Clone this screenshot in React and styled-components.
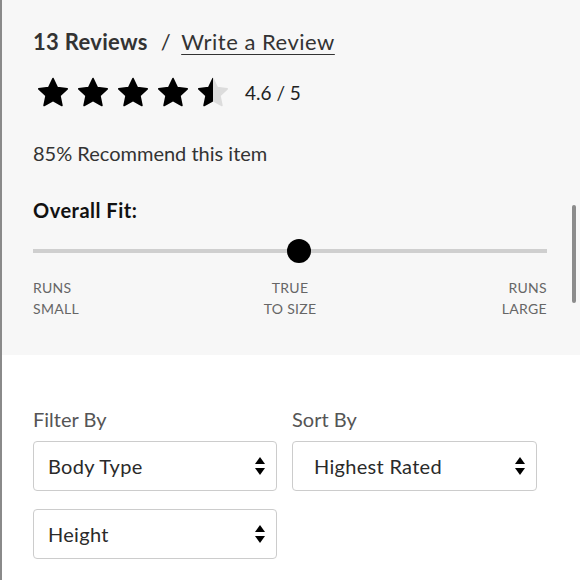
import React from "react";
import styled, { createGlobalStyle } from "styled-components";

const Global = createGlobalStyle`
  html, body { margin: 0; padding: 0; background: #ffffff; }
  body { font-family: Lato, "Noto Sans", sans-serif; color: #222; }
`;

const Page = styled.div`
  position: relative;
  width: 580px;
  height: 580px;
  overflow: hidden;
  box-sizing: border-box;
  border-left: 2px solid #8a8a8a;
  background: #fff;
`;

const Panel = styled.section`
  background: #f7f7f7;
  height: 355px;
  box-sizing: border-box;
  padding: 29px 33px 0 31px;
`;

const Heading = styled.div`
  display: flex;
  align-items: baseline;
  font-size: 22px;
  line-height: 26px;
  letter-spacing: 0.5px;
  color: #333;
`;

const Count = styled.span`
  font-weight: 700;
  letter-spacing: 0.3px;
`;

const Slash = styled.span`
  margin: 0 10px 0 13px;
`;

const WriteLink = styled.a`
  color: #333;
  text-decoration: underline;
  text-underline-offset: 4px;
  text-decoration-thickness: 1px;
`;

const RatingRow = styled.div`
  display: flex;
  align-items: center;
  height: 32px;
  margin-top: 21px;
  margin-left: 3px;
`;

const Stars = styled.div`
  display: flex;
  gap: 6px;
`;

const Score = styled.span`
  font-size: 19px;
  color: #222;
  margin-left: 15px;
`;

const Recommend = styled.p`
  margin: 33px 0 0 0;
  font-size: 20px;
  line-height: 24px;
  color: #333;
`;

const FitTitle = styled.h3`
  margin: 33px 0 0 0;
  font-size: 20px;
  line-height: 24px;
  font-weight: 700;
  letter-spacing: 0.5px;
  color: #111;
`;

const Track = styled.div`
  position: relative;
  height: 4px;
  background: #cfcfcf;
  margin-top: 27px;
`;

const Knob = styled.div`
  position: absolute;
  top: 50%;
  width: 24px;
  height: 24px;
  border-radius: 50%;
  background: #000;
  transform: translate(-50%, -50%);
`;

const Labels = styled.div`
  display: grid;
  grid-template-columns: 1fr auto 1fr;
  margin-top: 24px;
`;

const Label = styled.div`
  font-size: 14px;
  line-height: 21px;
  letter-spacing: 0.3px;
  color: #666;
  text-align: ${(p) => p.$align};
`;

const Filters = styled.section`
  padding: 52px 41px 0 31px;
  display: grid;
  grid-template-columns: 244px 245px;
  column-gap: 15px;
`;

const Column = styled.div`
  display: flex;
  flex-direction: column;
`;

const FieldLabel = styled.div`
  font-size: 20px;
  color: #555;
  margin-bottom: 10px;
  line-height: 24px;
`;

const Select = styled.div`
  display: flex;
  align-items: center;
  justify-content: space-between;
  box-sizing: border-box;
  height: 50px;
  border: 1px solid #cccccc;
  border-radius: 4px;
  background: #fff;
  padding: 0 10px 0 ${(p) => p.$pad || 14}px;
  font-size: 20px;
  letter-spacing: 0.3px;
  color: #2a2a2a;
  margin-bottom: 18px;
`;

const Scrollbar = styled.div`
  position: absolute;
  right: 4px;
  top: 205px;
  width: 4px;
  height: 98px;
  border-radius: 2px;
  background: #8c8c8c;
`;

const STAR =
  "M17 2.5 L21.3 11.6 L31.2 12.8 L23.9 19.6 L25.9 29.5 L17 24.6 L8.1 29.5 L10.1 19.6 L2.8 12.8 L12.7 11.6 Z";

function Star({ fill = 1, id }) {
  return (
    <svg width="34" height="32" viewBox="0 0 34 32">
      <defs>
        <clipPath id={id}>
          <rect x="0" y="0" width={34 * fill} height="32" />
        </clipPath>
      </defs>
      <path d={STAR} fill="#dcdcdc" stroke="#dcdcdc" strokeWidth="1.6" strokeLinejoin="round" />
      <path
        d={STAR}
        fill="#000"
        stroke="#000"
        strokeWidth="1.6"
        strokeLinejoin="round"
        clipPath={`url(#${id})`}
      />
    </svg>
  );
}

function Arrows() {
  return (
    <svg width="12" height="20" viewBox="0 0 12 20">
      <path d="M6 1 L11 8 L1 8 Z" fill="#000" />
      <path d="M6 19 L11 12 L1 12 Z" fill="#000" />
    </svg>
  );
}

export default function App() {
  const ratings = [1, 1, 1, 1, 0.5];
  return (
    <Page>
      <Global />
      <Panel>
        <Heading>
          <Count>13 Reviews</Count>
          <Slash>/</Slash>
          <WriteLink>Write a Review</WriteLink>
        </Heading>
        <RatingRow>
          <Stars>
            {ratings.map((r, i) => (
              <Star key={i} fill={r} id={`star-${i}`} />
            ))}
          </Stars>
          <Score>4.6 / 5</Score>
        </RatingRow>
        <Recommend>85% Recommend this item</Recommend>
        <FitTitle>Overall Fit:</FitTitle>
        <Track>
          <Knob style={{ left: `${(266 / 514) * 100}%` }} />
        </Track>
        <Labels>
          <Label $align="left">RUNS<br />SMALL</Label>
          <Label $align="center">TRUE<br />TO SIZE</Label>
          <Label $align="right">RUNS<br />LARGE</Label>
        </Labels>
      </Panel>
      <Filters>
        <Column>
          <FieldLabel>Filter By</FieldLabel>
          <Select>
            Body Type
            <Arrows />
          </Select>
          <Select>
            Height
            <Arrows />
          </Select>
        </Column>
        <Column>
          <FieldLabel>Sort By</FieldLabel>
          <Select $pad={21}>
            Highest Rated
            <Arrows />
          </Select>
        </Column>
      </Filters>
      <Scrollbar />
    </Page>
  );
}
